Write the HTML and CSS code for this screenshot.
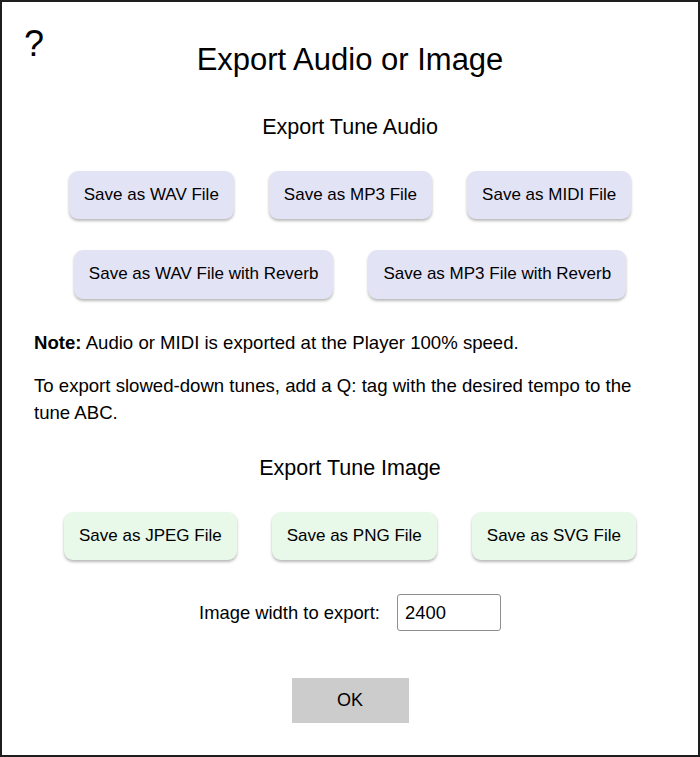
FILE: index.html
```html
<!DOCTYPE html>
<html>
<head>
<meta charset="utf-8">
<link rel="stylesheet" href="styles.css">
</head>
<body>
<div class="dialog">
  <span class="help">?</span>
  <h1 class="title">Export Audio or Image</h1>
  <h2 class="section-title first">Export Tune Audio</h2>
  <div class="btn-row row-a">
    <button class="btn audio">Save as WAV File</button>
    <button class="btn audio">Save as MP3 File</button>
    <button class="btn audio">Save as MIDI File</button>
  </div>
  <div class="btn-row row-b">
    <button class="btn audio">Save as WAV File with Reverb</button>
    <button class="btn audio">Save as MP3 File with Reverb</button>
  </div>
  <p class="note"><b>Note:</b> Audio or MIDI is exported at the Player 100% speed.</p>
  <p class="note second">To export slowed-down tunes, add a Q: tag with the desired tempo to the tune ABC.</p>
  <h2 class="section-title">Export Tune Image</h2>
  <div class="btn-row row-a">
    <button class="btn image">Save as JPEG File</button>
    <button class="btn image">Save as PNG File</button>
    <button class="btn image">Save as SVG File</button>
  </div>
  <div class="width-row">
    <label class="width-label" for="w">Image width to export:</label>
    <input class="width-input" id="w" type="text" value="2400">
  </div>
  <div class="ok-row">
    <button class="ok">OK</button>
  </div>
</div>
</body>
</html>
```
FILE: styles.css
```css
html, body {
  margin: 0;
  padding: 0;
  background: #fff;
}
.dialog {
  box-sizing: border-box;
  height: 757px;
  border: 2px solid #1e1e1e;
  position: relative;
  padding: 40px 0 0 0;
  font-family: "Liberation Sans", Arial, Helvetica, sans-serif;
  color: #000;
}
.help {
  position: absolute;
  left: 22px;
  top: 22px;
  font-size: 36px;
  line-height: 40px;
}
.title {
  margin: 0;
  font-size: 31px;
  font-weight: normal;
  line-height: 36px;
  text-align: center;
}
.section-title {
  margin: 29px 0 0 0;
  font-size: 21.5px;
  font-weight: normal;
  line-height: 26px;
  text-align: center;
}
.section-title.first {
  margin-top: 36px;
}
.btn-row {
  display: flex;
  justify-content: center;
  gap: 35px;
}
.btn-row.row-a {
  margin-top: 31px;
}
.btn-row.row-b {
  margin-top: 31px;
}
.btn {
  font-family: "Liberation Sans", Arial, Helvetica, sans-serif;
  font-size: 17px;
  line-height: 20px;
  color: #000;
  padding: 14px 15px 14px;
  border: none;
  border-radius: 9px;
  box-shadow: 0 2px 3px rgba(0, 0, 0, 0.28);
}
.btn.audio {
  background: #e3e3f6;
}
.btn.image {
  background: #e8f8e9;
}
.row-b .btn {
  padding: 14px 15px 15px;
}
.note {
  margin: 30px 0 0 0;
  padding: 0 32px;
  font-size: 18.6px;
  line-height: 27px;
}
.note.second {
  margin-top: 16px;
  padding-right: 60px;
}
.width-row {
  margin-top: 34px;
  display: flex;
  justify-content: center;
  align-items: center;
  gap: 17px;
}
.width-label {
  font-size: 18.4px;
  line-height: 27px;
}
.width-input {
  box-sizing: border-box;
  width: 104px;
  height: 37px;
  border: 1px solid #8e8e8e;
  border-radius: 3px;
  padding: 0 7px;
  font-family: "Liberation Sans", Arial, Helvetica, sans-serif;
  font-size: 18.4px;
  color: #000;
}
.ok-row {
  margin-top: 47px;
  display: flex;
  justify-content: center;
}
.ok {
  width: 117px;
  height: 45px;
  border: none;
  border-radius: 0;
  background: #cccccc;
  font-family: "Liberation Sans", Arial, Helvetica, sans-serif;
  font-size: 18px;
  color: #000;
}
```
